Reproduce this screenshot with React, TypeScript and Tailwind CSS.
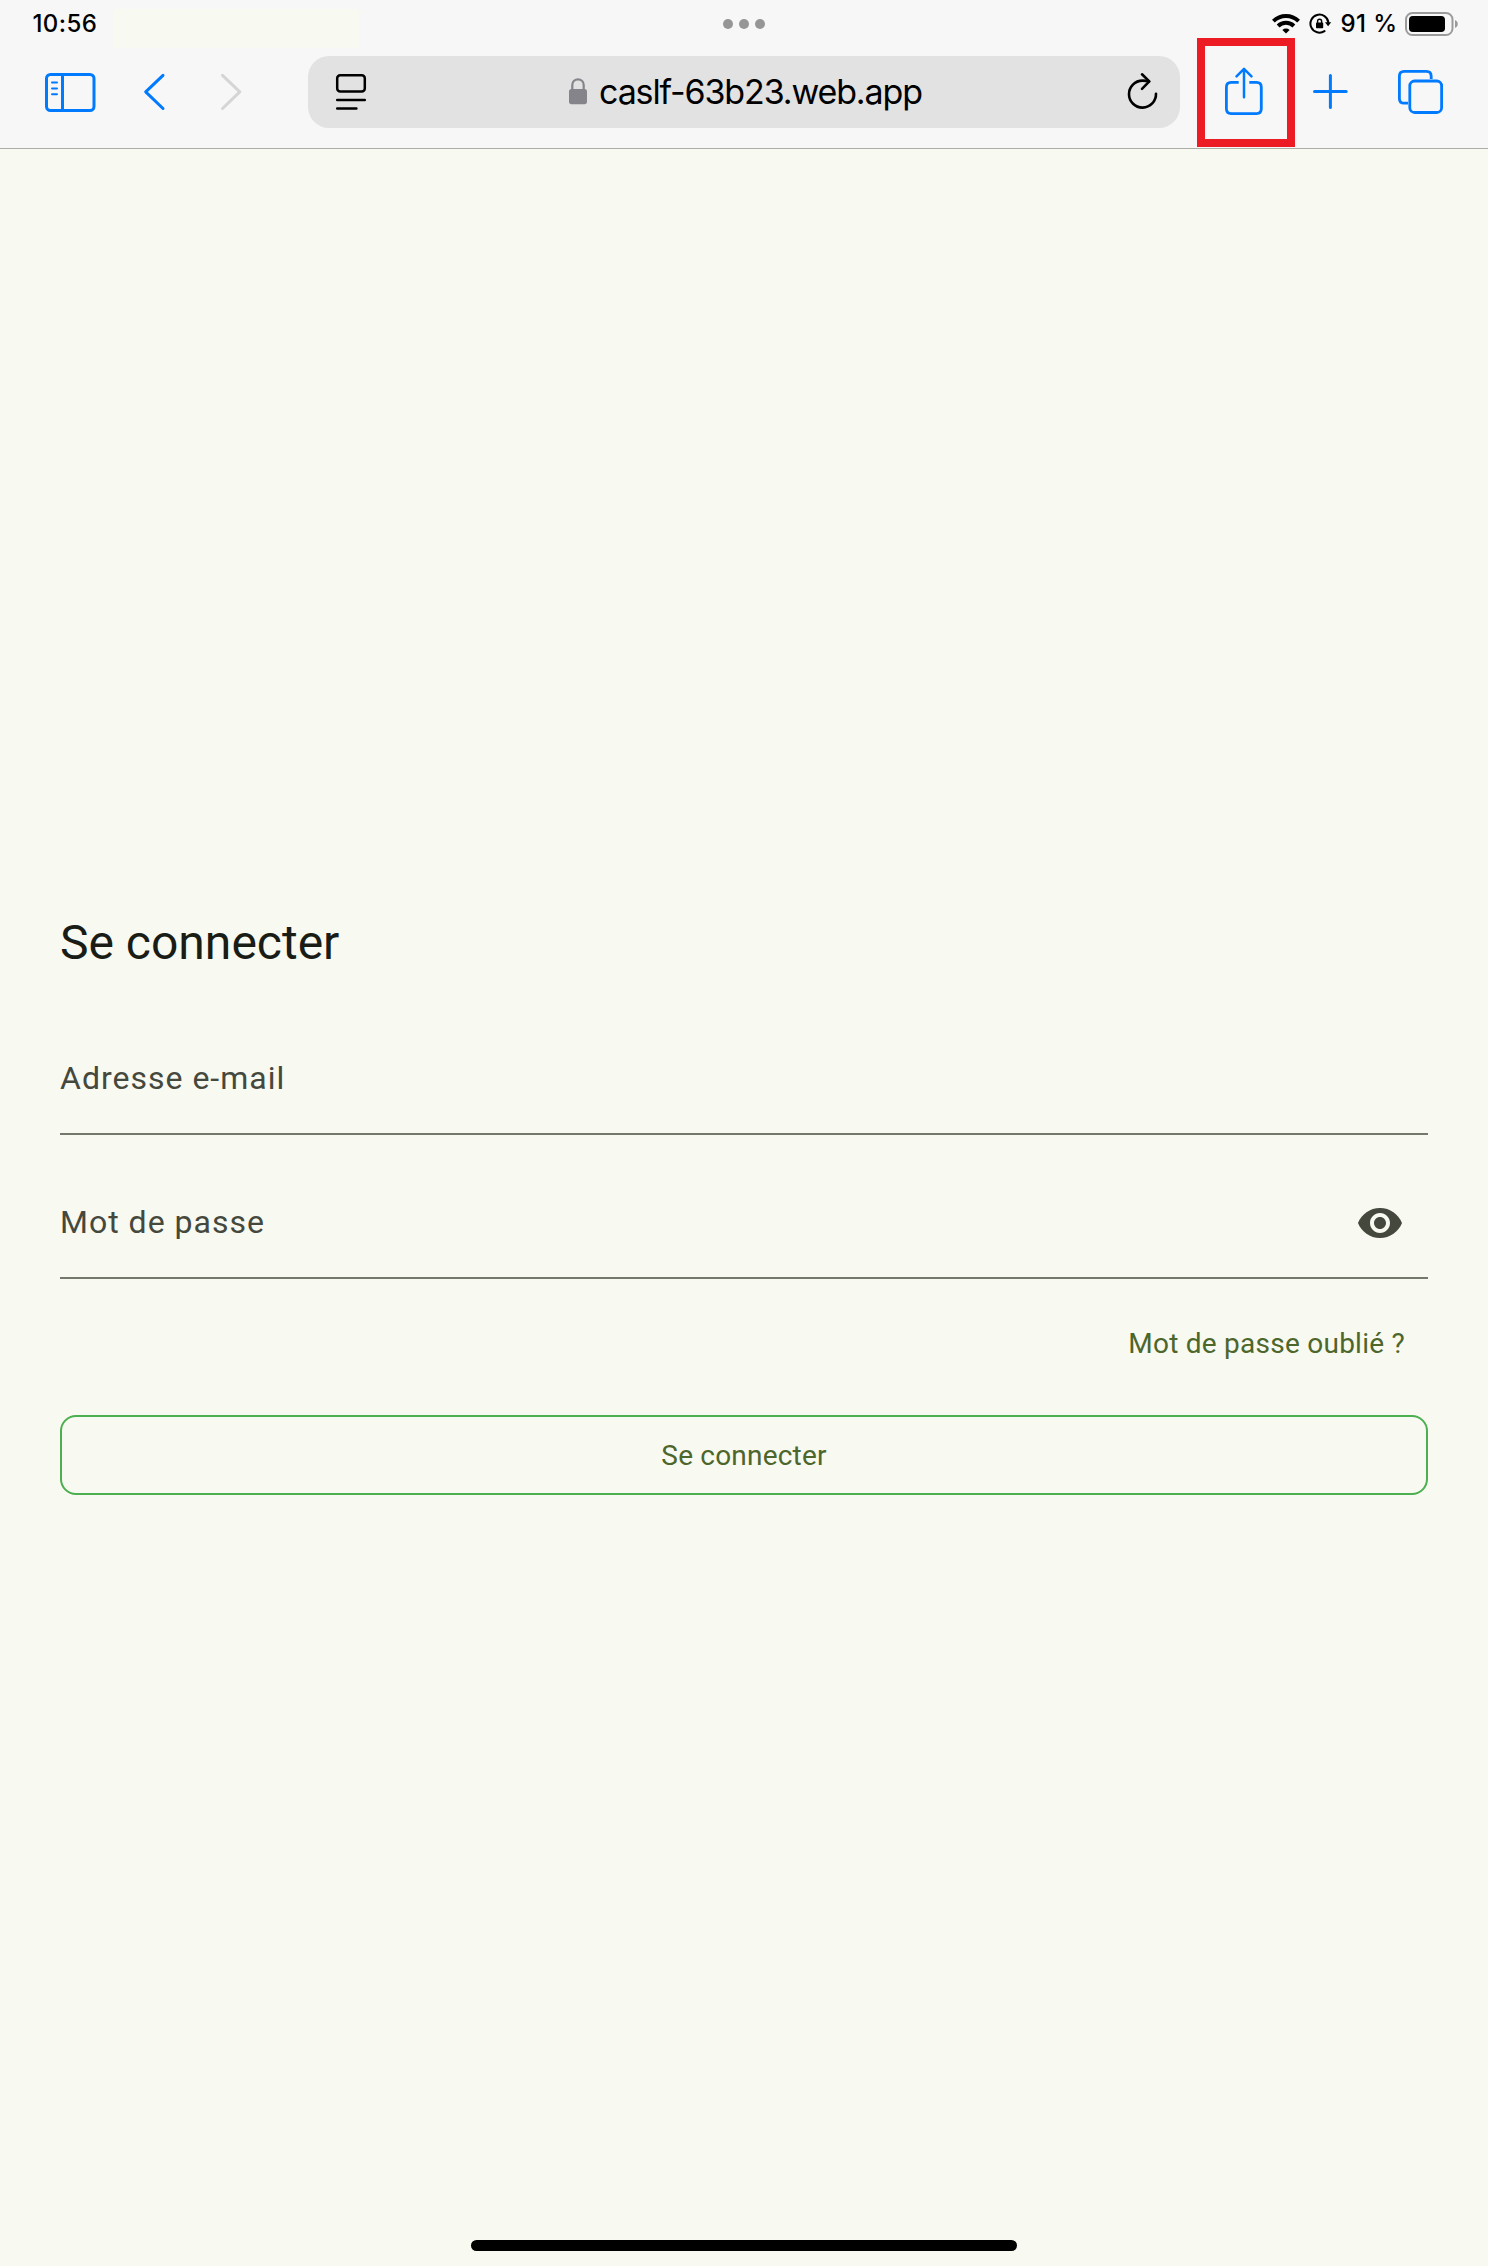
import type { ReactNode } from "react";

type IconProps = {
  box: string;
  className: string;
  color?: string;
  width?: number;
  label: string;
  children: ReactNode;
};

function Icon({ box, className, color = "#007aff", width = 3, label, children }: IconProps) {
  return (
    <svg
      viewBox={box}
      className={`block shrink-0 ${className}`}
      fill="none"
      stroke={color}
      strokeWidth={width}
      strokeLinecap="round"
      strokeLinejoin="round"
      role="img"
      aria-label={label}
    >
      {children}
    </svg>
  );
}

function StatusBar() {
  return (
    <div className="flex h-[56px] items-start">
      <span className="ml-[32.5px] mt-[9px] w-[80.5px] whitespace-nowrap text-[24px] font-medium leading-[30px] tracking-[0.4px] text-black">
        10:56
      </span>
      <div className="mt-[9px] h-[39px] w-[246px] bg-[#f8f9f0]" />
      <div className="ml-[364px] mt-[19px] flex gap-[6px]">
        <span className="size-[10px] rounded-full bg-[#969696]" />
        <span className="size-[10px] rounded-full bg-[#969696]" />
        <span className="size-[10px] rounded-full bg-[#969696]" />
      </div>
      <Icon box="1272 13 28 21" className="ml-[507px] mt-[13px] h-[21px] w-[28px]" color="#000" width={4} label="Wi-Fi">
        <g strokeLinecap="butt">
          <path d="M1273.4 21.1a18.2 18.2 0 0 1 25.2 0" />
          <path d="M1278.1 26a11.4 11.4 0 0 1 15.8 0" />
        </g>
        <path d="M1286 33.6l-3.6-3.7a5.2 5.2 0 0 1 7.2 0z" fill="#000" stroke="none" />
      </Icon>
      <Icon box="1309 12 23 23" className="ml-[9px] mt-[12px] h-[23px] w-[23px]" color="#000" width={2} label="Verrouillage">
        <path d="M1324.5 31.1a9 9 0 1 1 3.900-8.500" />
        <path d="M1325 22.2h6.2l-3.1 4z" fill="#000" stroke="none" />
        <rect x="1316" y="22.6" width="7.2" height="5.6" rx="0.8" fill="#000" stroke="none" />
        <path d="M1317.6 23v-1.8a2 2 0 0 1 4 0v1.8" strokeWidth="1.4" />
      </Icon>
      <span className="ml-[8.5px] mt-[9px] w-[64.5px] whitespace-nowrap text-[24px] font-medium leading-[30px] tracking-[0.4px] text-black">
        91 %
      </span>
      <Icon box="1405 12 54 24" className="mt-[12px] h-[24px] w-[54px]" color="#9b9b9b" width={2} label="Batterie">
        <rect x="1406" y="13" width="46.5" height="22" rx="6.5" />
        <rect x="1409" y="16" width="36" height="16" rx="3.8" fill="#000" stroke="none" />
        <path d="M1455 20v8c1.7-.7 2.8-2.2 2.8-4s-1.1-3.300-2.8-4z" fill="#9b9b9b" stroke="none" />
      </Icon>
    </div>
  );
}

function Toolbar() {
  return (
    <div className="flex h-[72px] items-center">
      <Icon box="44 72 52 41" className="ml-[44px] h-[41px] w-[52px]" label="Barre latérale">
        <rect x="46.500" y="74.500" width="47.500" height="36" rx="4" />
        <path d="M62.500 74.500v36" />
        <path d="M52 82.600h5M52 88.500h5M52 94.200h5" strokeWidth="2" />
      </Icon>
      <Icon box="142 72 24 40" className="ml-[46px] h-[40px] w-[24px]" label="Précédent">
        <path d="M163 75.300L145.700 91.900L163 108.500" />
      </Icon>
      <Icon box="220 72 24 40" className="ml-[54px] h-[40px] w-[24px]" color="#d5d5d6" label="Suivant">
        <path d="M222.500 75.300L239.800 91.900L222.500 108.500" />
      </Icon>
      <div className="ml-[64px] flex h-[72px] w-[872px] items-center rounded-[21px] bg-[#e2e2e2]">
        <Icon box="335 72 32 40" className="ml-[27px] h-[40px] w-[32px]" color="#000" width={2.500} label="Lecteur">
          <rect x="337.200" y="75.300" width="27.600" height="16.200" rx="3" />
          <path d="M337.200 100h27.600M337.200 108.500h19.200" />
        </Icon>
        <Icon box="568 77 20 28" className="ml-[201px] mt-[-2px] h-[28px] w-[20px]" color="#85848a" width={2.200} label="Sécurisé">
          <rect x="569" y="89" width="18" height="15.200" rx="2.600" fill="#85848a" stroke="none" />
          <path d="M572.300 90v-5c0-7.500 11.400-7.500 11.400 0v5" />
        </Icon>
        <span className="ml-[11px] w-[528px] whitespace-nowrap text-[34px] leading-[40px] tracking-[-1.13px] text-black">
          caslf-63b23.web.app
        </span>
        <Icon box="1127 72 32 40" className="h-[40px] w-[32px]" color="#000" width={2.600} label="Actualiser">
          <path d="M1156 93.800a13.500 13.500 0 1 1-13.500-13.200q4 0 6.500 0.900" />
          <path d="M1142 74.300L1149.300 81.400L1142 88.800" />
        </Icon>
      </div>
      <div className="ml-[17px] flex h-[109px] w-[98px] shrink-0 items-center justify-center border-8 border-[#ed1c24]">
        <Icon box="1223 66 42 52" className="mr-[4px] mt-[-1px] h-[52px] w-[42px]" width={2.800} label="Partager">
          <path d="M1238.700 82.400h-7.500q-4.800 0-4.800 4.800v21.600q0 4.800 4.800 4.800h25.300q4.800 0 4.800-4.800v-21.600q0-4.800-4.800-4.800h-7.200" strokeLinecap="butt" />
          <path d="M1244 97.200v-28M1236.500 76.300l7.500-7.500 7.500 7.500" strokeWidth="2.500" />
        </Icon>
      </div>
      <Icon box="1312 73 37 37" className="ml-[17px] mt-[-1px] h-[37px] w-[37px]" label="Nouvel onglet">
        <path d="M1330.400 75.500v32M1314.500 91.500h31.700" />
      </Icon>
      <Icon box="1396 69 48 46" className="ml-[47px] h-[46px] w-[48px]" width={2.800} label="Onglets">
        <path d="M1431.200 79v-2.800q0-4.800-4.800-4.800h-22.200q-4.800 0-4.800 4.800v22.200q0 4.800 4.800 4.800h3.800" strokeLinecap="butt" />
        <rect x="1409.800" y="81" width="31.800" height="31.500" rx="4.800" />
      </Icon>
    </div>
  );
}

function LoginForm() {
  return (
    <form className="mx-[60px] mt-[766px] flex flex-col font-['Roboto',sans-serif]" onSubmit={(e) => e.preventDefault()}>
      <h1 className="h-[64px] text-[48px] leading-[56px] tracking-[0px] text-[#1a1c16]">Se connecter</h1>
      <div className="mt-[59px] flex h-[97px] border-b-2 border-[#75796c]">
        <span className="mt-[16px] text-[32px] leading-[48px] tracking-[1px] text-[#44483d]">Adresse e-mail</span>
      </div>
      <div className="mt-[28px] flex h-[116px] items-start justify-between border-b-2 border-[#75796c]">
        <span className="mt-[35px] text-[32px] leading-[48px] tracking-[1px] text-[#44483d]">Mot de passe</span>
        <svg viewBox="0 0 24 24" className="mr-[24px] mt-[36px] size-[48px]" fill="#44483d" aria-label="Afficher le mot de passe">
          <path d="M12 4.500C7 4.500 2.730 7.610 1 12c1.730 4.390 6 7.500 11 7.500s9.270-3.110 11-7.500c-1.730-4.390-6-7.500-11-7.500zM12 17c-2.760 0-5-2.240-5-5s2.240-5 5-5 5 2.240 5 5-2.240 5-5 5zm0-8c-1.660 0-3 1.340-3 3s1.340 3 3 3 3-1.340 3-3-1.340-3-3-3z" />
        </svg>
      </div>
      <button type="button" className="mr-[23px] mt-[45px] h-[40px] self-end whitespace-nowrap text-[28px] leading-[40px] tracking-[0.25px] text-[#4c662b]">
        Mot de passe oublié ?
      </button>
      <button type="submit" className="mt-[51px] flex h-[80px] items-center justify-center rounded-[16px] border-2 border-[#4caf50] pt-[2px] text-[28px] leading-[40px] tracking-[0.2px] text-[#4c662b]">
        Se connecter
      </button>
    </form>
  );
}

export default function App() {
  return (
    <div className="flex h-[2266px] w-[1488px] flex-col overflow-hidden bg-[#f8f9f0] font-['Inter',sans-serif]">
      <header className="h-[149px] shrink-0 border-b border-[#abada6] bg-[#f7f7f7]">
        <StatusBar />
        <Toolbar />
      </header>
      <LoginForm />
      <div className="mx-auto mb-[15px] mt-auto h-[11px] w-[546px] rounded-full bg-black" />
    </div>
  );
}
